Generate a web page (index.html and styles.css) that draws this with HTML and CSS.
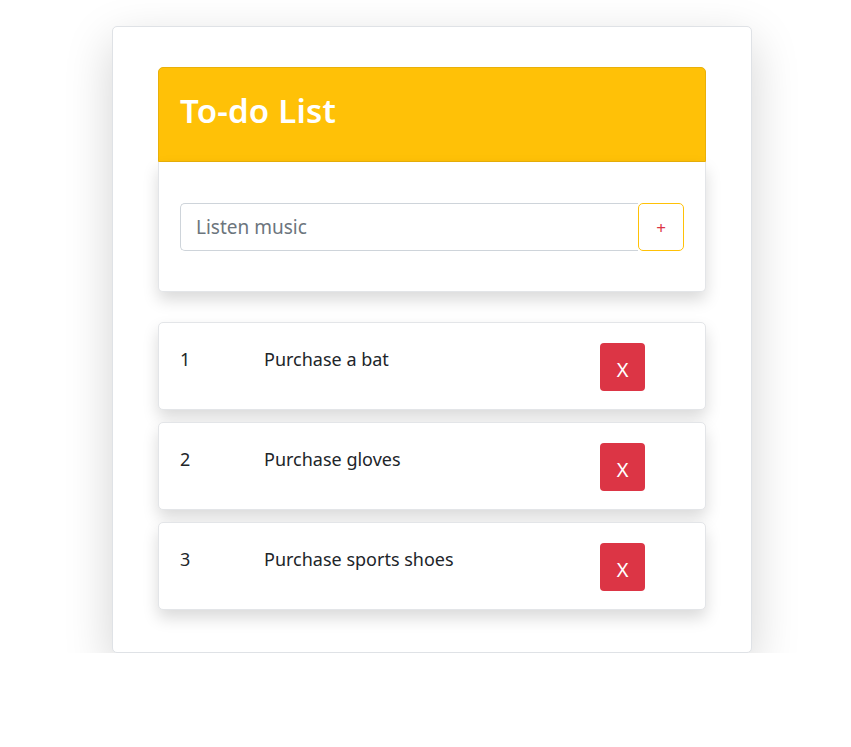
FILE: index.html
```html
<!DOCTYPE html>
<html>
<head>
<meta charset="utf-8">
<link rel="stylesheet" href="styles.css">
</head>
<body>
<div class="page">
  <div class="container">
    <div class="header">
      <h2 class="title">To-do List</h2>
    </div>
    <div class="input-card">
      <div class="input-group">
        <input class="field" type="text" placeholder="Listen music">
        <button class="add-btn">+</button>
      </div>
    </div>
    <div class="list">
      <div class="item">
        <div class="num">1</div>
        <div class="text">Purchase a bat</div>
        <div><button class="del-btn">X</button></div>
      </div>
      <div class="item">
        <div class="num">2</div>
        <div class="text">Purchase gloves</div>
        <div><button class="del-btn">X</button></div>
      </div>
      <div class="item">
        <div class="num">3</div>
        <div class="text">Purchase sports shoes</div>
        <div><button class="del-btn">X</button></div>
      </div>
    </div>
  </div>
</div>
</body>
</html>
```
FILE: styles.css
```css
* { box-sizing: border-box; }
html, body { margin: 0; padding: 0; background: #fff; }
body {
  font-family: "Noto Sans", "Open Sans", sans-serif;
  color: #212529;
  font-size: 16px;
  line-height: 1.5;
}
.page {
  padding: 26px 0 0 112px;
}
.container {
  width: 640px;
  border: 1px solid #dfe2e6;
  border-radius: 5px;
  background: #fff;
  box-shadow: 0 16px 48px rgba(0,0,0,0.175);
  padding: 40px 45px 42px;
}
.header {
  background: #ffc107;
  border: 1px solid #e9b00a;
  border-radius: 5px 5px 0 0;
  padding: 24px 21px;
  height: 95px;
}
.title {
  margin: 0;
  color: #fff;
  font-size: 33px;
  font-weight: 600;
  line-height: 38px;
  letter-spacing: 0.2px;
}
.input-card {
  border: 1px solid #e3e5e8;
  border-top: none;
  border-radius: 0 0 5px 5px;
  background: #fff;
  box-shadow: 0 8px 16px rgba(0,0,0,0.15);
  padding: 41px 21px 40px;
}
.input-group {
  display: flex;
  height: 48px;
}
.field {
  flex: 1;
  min-width: 0;
  border: 1px solid #ced4da;
  border-right: none;
  border-radius: 5px 0 0 5px;
  padding: 0 15px;
  font-family: inherit;
  font-size: 19px;
  color: #212529;
  outline: none;
}
.field::placeholder { color: #6c757d; }
.add-btn {
  width: 46px;
  border: 1px solid #ffc107;
  border-radius: 5px;
  background: #fff;
  color: #dc3545;
  font-family: inherit;
  font-size: 17px;
  padding: 0;
  margin-left: 0;
}
.list {
  margin-top: 30px;
  display: flex;
  flex-direction: column;
  gap: 12px;
}
.item {
  display: grid;
  grid-template-columns: 84px 336px 84px;
  border: 1px solid #e3e5e8;
  border-radius: 5px;
  background: #fff;
  box-shadow: 0 8px 16px rgba(0,0,0,0.15);
  padding: 20px 21px 19px;
  height: 88px;
}
.num, .text {
  font-size: 18px;
  line-height: 24px;
  padding-top: 4px;
}
.del-btn {
  width: 45px;
  height: 48px;
  border: none;
  border-radius: 4px;
  background: #dc3545;
  color: #fff;
  font-family: inherit;
  font-size: 20px;
  padding: 4px 0 0;
}
```
